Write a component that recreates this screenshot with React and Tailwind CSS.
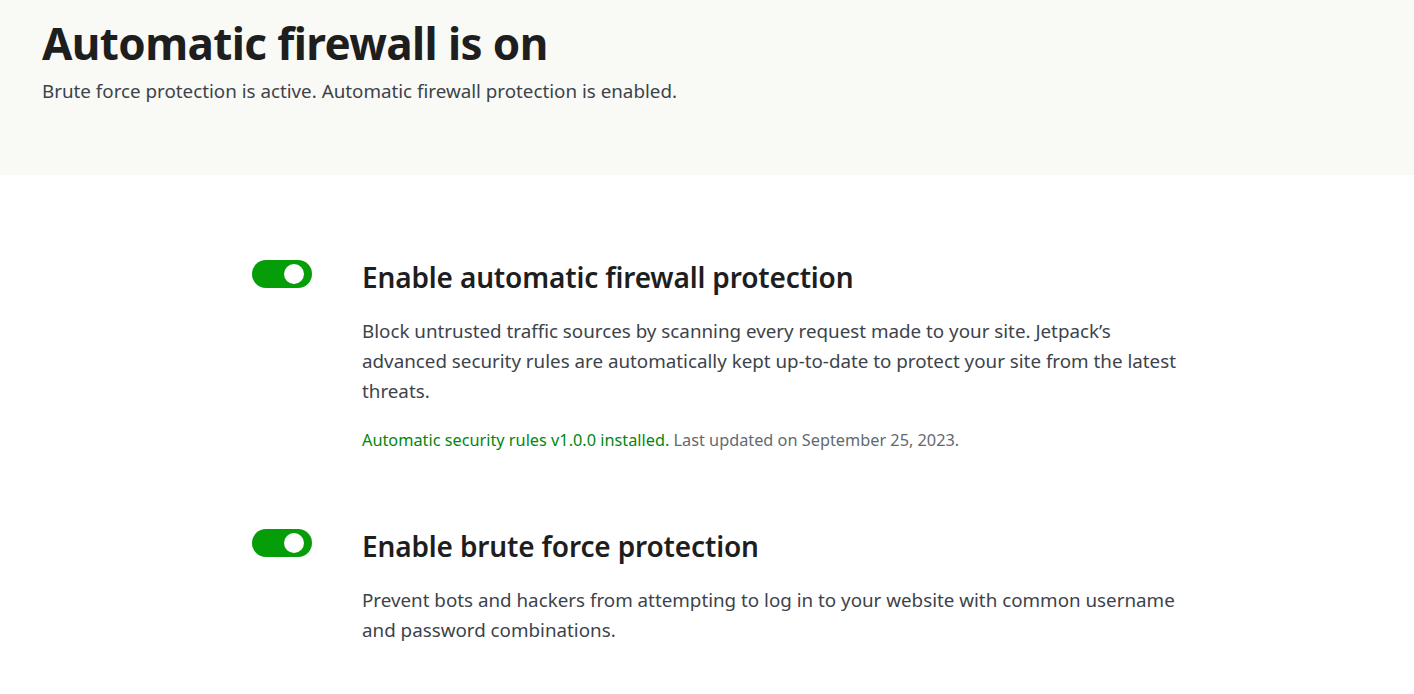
const font = { fontFamily: '"Noto Sans", "Open Sans", sans-serif' };

function Toggle() {
  return (
    <div className="mt-[4px] flex h-[28px] w-[60px] shrink-0 items-center justify-end rounded-full bg-[#069e08] pr-[8px]">
      <div className="h-[20px] w-[20px] rounded-full bg-white" />
    </div>
  );
}

function Setting({ title, children }) {
  return (
    <div className="flex gap-[50px]">
      <Toggle />
      <div className="max-w-[830px]">
        <h2 className="text-[28px] font-semibold leading-[42px] tracking-[-0.15px] text-[#1e1e1e]">{title}</h2>
        {children}
      </div>
    </div>
  );
}

export default function App() {
  return (
    <div className="min-h-[694px] bg-white" style={font}>
      <div className="h-[175px] bg-[#f9f9f6] px-[42px] pt-[14px]">
        <h1 className="text-[44px] font-bold leading-[58px] tracking-[-0.6px] text-[#1e1e1e]">
          Automatic firewall is on
        </h1>
        <p className="mt-[6px] text-[18.8px] leading-[26px] text-[#3c434a]">
          Brute force protection is active. Automatic firewall protection is enabled.
        </p>
      </div>

      <div className="flex flex-col gap-[73px] pl-[252px] pt-[81px]">
        <Setting title="Enable automatic firewall protection">
          <p className="mt-[18px] text-[18.8px] leading-[30px] text-[#3c434a]">
            Block untrusted traffic sources by scanning every request made to your site. Jetpack’s advanced security rules are automatically kept up-to-date to protect your site from the latest threats.
          </p>
          <p className="mt-[22px] text-[16.3px] leading-[24px] text-[#646970]">
            <span className="text-[#008710]">Automatic security rules v1.0.0 installed.</span> Last updated on September 25, 2023.
          </p>
        </Setting>
        <Setting title="Enable brute force protection">
          <p className="mt-[18px] text-[18.8px] leading-[30px] text-[#3c434a]">
            Prevent bots and hackers from attempting to log in to your website with common username and password combinations.
          </p>
        </Setting>
      </div>
    </div>
  );
}
